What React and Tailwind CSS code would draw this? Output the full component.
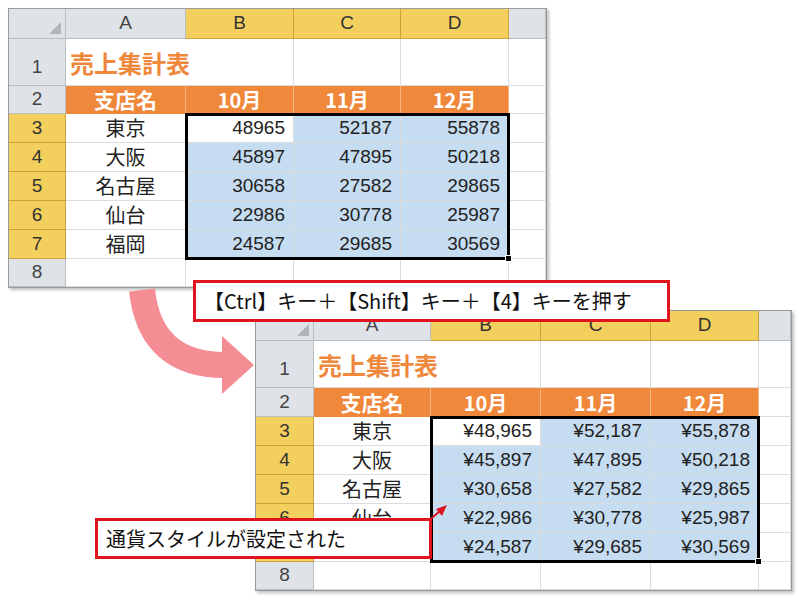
import React from "react";

const jp = { fontFamily: '"Noto Sans CJK JP", "Noto Sans", sans-serif' };
const num = { fontFamily: '"Liberation Sans", Arial, sans-serif' };

const stores = ["東京", "大阪", "名古屋", "仙台", "福岡"];
const data = [
  [48965, 52187, 55878],
  [45897, 47895, 50218],
  [30658, 27582, 29865],
  [22986, 30778, 25987],
  [24587, 29685, 30569],
];

function fmt(n, yen) {
  return yen ? "¥" + n.toLocaleString("en-US") : String(n);
}

function Sheet({ className, cols, rows, yen }) {
  const head = "bg-[#dfe3e8] border-r border-b border-[#b8bec6] flex items-center justify-center text-[#444] text-[19px]";
  const sel = "bg-[#f3cf5d] border-r border-b border-[#c9a33a] flex items-center justify-center text-[#333] text-[19px]";
  const cell = "border-r border-b border-[#dcdcdc] bg-white";
  const selLeft = cols[0] + cols[1];
  const selTop = rows[0] + rows[1] + rows[2];
  const selW = cols[2] + cols[3] + cols[4];
  const selH = rows[3] + rows[4] + rows[5] + rows[6] + rows[7];
  return (
    <div className={`absolute border border-[#9a9a9a] bg-white shadow-[2px_2px_3px_rgba(0,0,0,0.25)] ${className}`} style={jp}>
      <div className="grid" style={{ gridTemplateColumns: cols.map((c) => c + "px").join(" "), gridTemplateRows: rows.map((r) => r + "px").join(" ") }}>
        <div className={`${head} justify-end items-end pr-1 pb-1`}>
          <div className="w-0 h-0 border-l-[12px] border-l-transparent border-b-[12px] border-b-[#b0b5bb]" />
        </div>
        <div className={head} style={num}>A</div>
        <div className={sel} style={num}>B</div>
        <div className={sel} style={num}>C</div>
        <div className={sel} style={num}>D</div>
        <div className={head} />

        <div className={`${head} items-end pb-1`} style={num}>1</div>
        <div className={`${cell} col-span-2 flex items-end pl-1 pb-1 text-[#f0883c] text-[24px] font-bold`}>売上集計表</div>
        <div className={cell} />
        <div className={cell} />
        <div className={cell} />

        <div className={head} style={num}>2</div>
        <div className="bg-[#f0883c] border-r border-[#f6b27f] flex items-center justify-center text-white text-[21px] font-bold">支店名</div>
        {["10月", "11月", "12月"].map((m) => (
          <div key={m} className="bg-[#f0883c] border-r border-[#f6b27f] flex items-center justify-center text-white text-[20px] font-bold">{m}</div>
        ))}
        <div className={cell} />

        {stores.map((s, i) => (
          <React.Fragment key={s}>
            <div className={sel} style={num}>{i + 3}</div>
            <div className={`${cell} flex items-center justify-center text-[20px] text-[#222]`}>{s}</div>
            {data[i].map((v, j) => (
              <div
                key={j}
                className={`border-r border-b border-[#dcdcdc] flex items-center justify-end pr-2 text-[19px] text-[#222] ${i === 0 && j === 0 ? "bg-white" : "bg-[#c6dcf1]"}`}
                style={num}
              >
                {fmt(v, yen)}
              </div>
            ))}
            <div className={cell} />
          </React.Fragment>
        ))}

        <div className={head} style={num}>8</div>
        <div className={cell} />
        <div className={cell} />
        <div className={cell} />
        <div className={cell} />
        <div className={cell} />
      </div>
      <div className="absolute border-[3px] border-black" style={{ left: selLeft - 1, top: selTop - 1, width: selW + 2, height: selH + 2 }}>
        <div className="absolute -right-[5px] -bottom-[5px] w-[7px] h-[7px] bg-black border border-white" />
      </div>
    </div>
  );
}

export default function App() {
  return (
    <div className="relative w-[800px] h-[600px] bg-white overflow-hidden">
      <Sheet className="left-[8px] top-[8px]" cols={[57, 120, 108, 107, 108, 37]} rows={[30, 47, 28, 29, 29, 29, 29, 29, 28]} />

      <svg className="absolute left-0 top-0" width="800" height="600">
        <path d="M 142 290 Q 150 365 225 365" fill="none" stroke="#f58d95" strokeWidth="26" />
        <polygon points="222,336 254,365 222,394" fill="#f58d95" />
      </svg>

      <Sheet className="left-[255px] top-[310px]" cols={[58, 117, 110, 110, 108, 32]} rows={[30, 47, 29, 29, 29, 29, 29, 29, 28]} yen />

      <div className="absolute left-[193px] top-[280px] w-[477px] h-[42px] border-[3px] border-[#e0141e] bg-white flex items-center px-2 text-[20px] text-[#111]" style={jp}>
        【Ctrl】キー＋【Shift】キー＋【4】キーを押す
      </div>

      <svg className="absolute left-0 top-0" width="800" height="600">
        <line x1="420" y1="528" x2="440" y2="511" stroke="#e0141e" strokeWidth="2" />
        <polygon points="447,505 436,509 442,516" fill="#e0141e" />
      </svg>

      <div className="absolute left-[95px] top-[518px] w-[337px] h-[41px] border-[3px] border-[#e0141e] bg-white flex items-center px-2 text-[20px] text-[#111]" style={jp}>
        通貨スタイルが設定された
      </div>
    </div>
  );
}
